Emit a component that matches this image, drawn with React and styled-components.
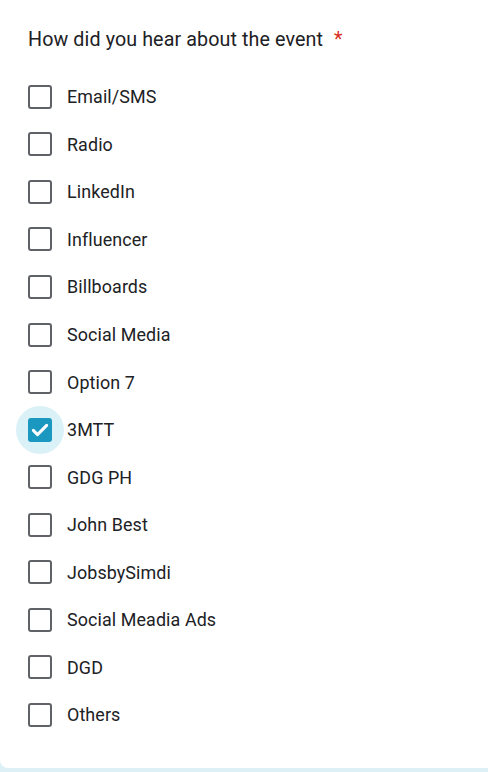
import React, { useState } from 'react';
import styled, { createGlobalStyle } from 'styled-components';

const GlobalStyle = createGlobalStyle`
    html, body {
        margin: 0;
        padding: 0;
        background: #dcf0f6;
    }
    body {
        font-family: Roboto, "Noto Sans", Arial, sans-serif;
        color: #202124;
    }
`;

const Card = styled.div`
    background: #fff;
    border-radius: 0 0 8px 8px;
    margin-right: -12px;
    padding: 28px 0 29px 28px;
    box-sizing: border-box;
    height: 768px;
`;

const Title = styled.div`
    font-size: 19.7px;
    line-height: 24px;
    letter-spacing: 0.1px;
    display: flex;
    align-items: center;

    .star {
        color: #d93025;
        margin-left: 11px;
    }
`;

const List = styled.div`
    margin-top: 21px;
    display: flex;
    flex-direction: column;
`;

const Row = styled.label`
    height: 47.55px;
    display: flex;
    align-items: center;
    gap: 15px;
    cursor: pointer;
    font-size: 17.9px;
    letter-spacing: 0.1px;
`;

const BoxWrap = styled.span`
    position: relative;
    width: 24px;
    height: 24px;
    flex: none;

    &::before {
        content: '';
        position: absolute;
        left: -12px;
        top: -12px;
        width: 48px;
        height: 48px;
        border-radius: 50%;
        background: #d9f1f7;
        opacity: ${p => (p.$checked ? 1 : 0)};
    }
`;

const Box = styled.span`
    position: relative;
    display: flex;
    align-items: center;
    justify-content: center;
    box-sizing: border-box;
    width: 24px;
    height: 24px;
    border-radius: 3px;
    border: ${p => (p.$checked ? 'none' : '2px solid #5f6368')};
    background: ${p => (p.$checked ? '#1b98c0' : '#fff')};
`;

const options = [
    'Email/SMS',
    'Radio',
    'LinkedIn',
    'Influencer',
    'Billboards',
    'Social Media',
    'Option 7',
    '3MTT',
    'GDG PH',
    'John Best',
    'JobsbySimdi',
    'Social Meadia Ads',
    'DGD',
    'Others',
];

const App = () => {
    const [checked, setChecked] = useState({ '3MTT': true });

    return (
        <>
            <GlobalStyle />
            <Card>
                <Title>
                    How did you hear about the event <span className="star">*</span>
                </Title>
                <List>
                    {options.map(opt => (
                        <Row key={opt} onClick={() => setChecked({ ...checked, [opt]: !checked[opt] })}>
                            <BoxWrap $checked={!!checked[opt]}>
                                <Box $checked={!!checked[opt]}>
                                    {checked[opt] && (
                                        <svg width="20" height="20" viewBox="0 0 24 24">
                                            <path d="M4 12.5l5 5L20 6.5" fill="none" stroke="#fff" strokeWidth="3.6" strokeLinecap="round" strokeLinejoin="round" />
                                        </svg>
                                    )}
                                </Box>
                            </BoxWrap>
                            {opt}
                        </Row>
                    ))}
                </List>
            </Card>
        </>
    );
};

export default App;
